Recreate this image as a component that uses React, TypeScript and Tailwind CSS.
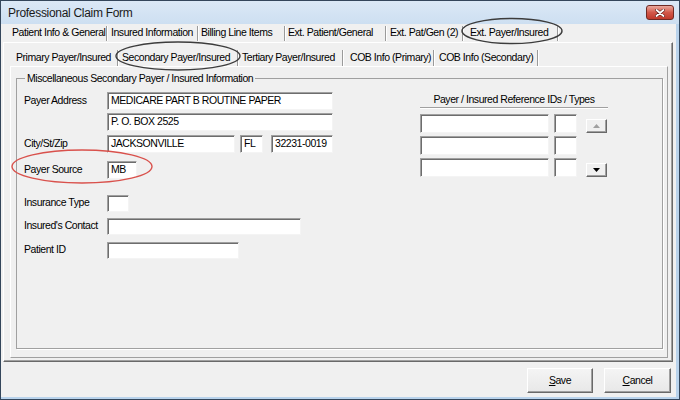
import React from 'react';

type Tab = { label: string; cls: string };

const topTabs: Tab[] = [
  { label: 'Patient Info & General', cls: 'w-[105px] pl-[11px]' },
  { label: 'Insured Information', cls: 'w-[89px] pl-[3px]' },
  { label: 'Billing Line Items', cls: 'w-[85px] pl-[2px]' },
  { label: 'Ext. Patient/General', cls: 'w-[99px] pl-[2px]' },
  { label: 'Ext. Pat/Gen (2)', cls: 'w-[75px] pl-[3px]' },
  { label: 'Ext. Payer/Insured', cls: 'w-[93px] pl-[6px]' },
];

const subTabs: Tab[] = [
  { label: 'Primary Payer/Insured', cls: 'w-[113px] pl-[12px]' },
  { label: 'Secondary Payer/Insured', cls: 'w-[118px] pl-[3px]' },
  { label: 'Tertiary Payer/Insured', cls: 'w-[103px] pl-[3px]' },
  { label: 'COB Info (Primary)', cls: 'w-[89px] pl-[6px]' },
  { label: 'COB Info (Secondary)', cls: 'w-[102px] pl-[4px]' },
];

const Sep = ({ h = 'h-[15px]' }: { h?: string }) => (
  <div className={`w-[2px] ${h} border-l border-l-[#9a9a9a] border-r border-r-white`} />
);

const Field = ({ w, h = 'h-[18px]', value = '' }: { w: string; h?: string; value?: string }) => (
  <div
    className={`${w} ${h} shrink-0 bg-white border-t border-l border-t-[#a0a0a0] border-l-[#a0a0a0] border-r border-b border-r-[#f4f4f4] border-b-[#f4f4f4] shadow-[inset_1px_1px_0_#6d6d6d] pl-[3px] flex items-center whitespace-nowrap overflow-hidden`}
  >
    {value}
  </div>
);

const Row = ({ label, mt, children }: { label?: string; mt: string; children: React.ReactNode }) => (
  <div className={`flex items-center ${mt}`}>
    <div className="w-[85px] shrink-0 pl-[2px] whitespace-nowrap">{label}</div>
    {children}
  </div>
);

const SpinButton = ({ down }: { down?: boolean }) => (
  <div className="ml-[9px] w-[21px] h-[14px] self-end bg-[#f0f0f0] border-t border-l border-white border-r border-b border-r-[#696969] border-b-[#696969] shadow-[inset_-1px_-1px_0_#a0a0a0] flex items-center justify-center">
    <svg width="7" height="4" viewBox="0 0 7 4">
      {down ? <path d="M0 0h7L3.5 4z" fill="#000" /> : <path d="M0 4h7L3.5 0z" fill="#a0a0a0" />}
    </svg>
  </div>
);

const Button = ({ first, rest, w }: { first: string; rest: string; w: string }) => (
  <div className={`${w} h-[25px] bg-gradient-to-b from-[#f4f4f4] to-[#e8e8e8] border-t border-l border-white border-r border-b border-r-[#696969] border-b-[#696969] shadow-[inset_-1px_-1px_0_#a0a0a0] flex items-center justify-center`}>
    <span className="underline underline-offset-1">{first}</span>
    {rest}
  </div>
);

export default function App() {
  return (
    <div className="relative w-[680px] h-[400px] bg-[#b9d3ec] border border-[#34465b] flex flex-col font-['Liberation_Sans',Arial,sans-serif] text-[10.5px] tracking-[-0.45px] text-black overflow-hidden">
      {/* title bar */}
      <div className="h-[23px] shrink-0 bg-gradient-to-b from-[#dbe8f6] to-[#cddff1] flex items-center justify-between pl-[7px] pr-[5px]">
        <span className="text-[12px] tracking-[-0.3px] text-[#1a1a1a]">Professional Claim Form</span>
        <div className="w-[28px] h-[15px] rounded-[3px] border border-[#6e2a24] bg-gradient-to-b from-[#e9a89d] via-[#d2584a] to-[#c0392b] flex items-center justify-center">
          <svg width="10" height="8" viewBox="0 0 10 8">
            <path d="M1.5 1l7 6M8.5 1l-7 6" stroke="#5a1d18" strokeWidth="3" strokeLinecap="round" />
            <path d="M1.5 1l7 6M8.5 1l-7 6" stroke="#fff" strokeWidth="1.8" strokeLinecap="round" />
          </svg>
        </div>
      </div>

      {/* client area */}
      <div className="w-[675px] h-[373px] bg-[#f0f0f0] flex flex-col">
        <div className="h-[18px] flex items-center">
          {topTabs.map((t) => (
            <React.Fragment key={t.label}>
              <div className={`${t.cls} whitespace-nowrap`}>{t.label}</div>
              <Sep />
            </React.Fragment>
          ))}
        </div>

        {/* outer tab page */}
        <div className="ml-[2px] w-[670px] h-[320px] border-t border-l border-white border-r border-b border-r-[#696969] border-b-[#696969] shadow-[inset_-1px_-1px_0_#a0a0a0] flex flex-col">
          <div className="h-[23px] pt-[6px] flex items-center">
            {subTabs.map((t) => (
              <React.Fragment key={t.label}>
                <div className={`${t.cls} whitespace-nowrap`}>{t.label}</div>
                <Sep h="h-[16px]" />
              </React.Fragment>
            ))}
          </div>

          {/* inner tab page */}
          <div className="ml-[6px] w-[658px] h-[292px] border-t border-l border-white border-r border-b border-r-[#a0a0a0] border-b-[#a0a0a0]">
            <fieldset className="mt-[4px] ml-[5px] w-[647px] h-[278px] border border-[#a0a0a0] shadow-[1px_1px_0_#fff] px-[5px] pt-[5px]">
              <legend className="ml-[3px] px-[2px]">Miscellaneous Secondary Payer / Insured Information</legend>
              <div className="flex">
                <div className="w-[311px] flex flex-col">
                  <Row label="Payer Address" mt="mt-0">
                    <Field w="w-[226px]" value="MEDICARE PART B ROUTINE PAPER" />
                  </Row>
                  <Row mt="mt-[3px]">
                    <Field w="w-[226px]" value="P. O. BOX 2525" />
                  </Row>
                  <Row label="City/St/Zip" mt="mt-[4px]">
                    <Field w="w-[128px]" value="JACKSONVILLE" />
                    <div className="ml-[5px]">
                      <Field w="w-[23px]" value="FL" />
                    </div>
                    <div className="ml-[8px]">
                      <Field w="w-[62px]" value="32231-0019" />
                    </div>
                  </Row>
                  <Row label="Payer Source" mt="mt-[8px]">
                    <Field w="w-[30px]" value="MB" />
                  </Row>
                  <Row label="Insurance Type" mt="mt-[16px]">
                    <Field w="w-[22px]" h="h-[17px]" />
                  </Row>
                  <Row label="Insured's Contact" mt="mt-[6px]">
                    <Field w="w-[194px]" h="h-[17px]" />
                  </Row>
                  <Row label="Patient ID" mt="mt-[7px]">
                    <Field w="w-[132px]" h="h-[17px]" />
                  </Row>
                </div>

                <div className="ml-[87px] w-[188px] flex flex-col">
                  <div className="h-[16px] text-center border-b border-b-[#a0a0a0] shadow-[0_1px_0_#fff] whitespace-nowrap">
                    Payer / Insured Reference IDs / Types
                  </div>
                  <div className="mt-[6px] flex flex-col gap-[3px]">
                    <div className="flex">
                      <Field w="w-[129px]" h="h-[19px]" />
                      <div className="ml-[5px]">
                        <Field w="w-[23px]" h="h-[19px]" />
                      </div>
                      <SpinButton />
                    </div>
                    <div className="flex">
                      <Field w="w-[129px]" h="h-[19px]" />
                      <div className="ml-[5px]">
                        <Field w="w-[23px]" h="h-[19px]" />
                      </div>
                    </div>
                    <div className="flex">
                      <Field w="w-[129px]" h="h-[19px]" />
                      <div className="ml-[5px]">
                        <Field w="w-[23px]" h="h-[19px]" />
                      </div>
                      <SpinButton down />
                    </div>
                  </div>
                </div>
              </div>
            </fieldset>
          </div>
        </div>

        <div className="mt-[6px] flex justify-end gap-[11px] pr-[5px]">
          <Button first="S" rest="ave" w="w-[66px]" />
          <Button first="C" rest="ancel" w="w-[67px]" />
        </div>
      </div>

      {/* annotation ellipses */}
      <svg className="absolute -left-px -top-px w-[680px] h-[400px] pointer-events-none" viewBox="0 0 680 400">
        <ellipse cx="512" cy="31" rx="50" ry="12.5" fill="none" stroke="#3c3c3c" strokeWidth="1.4" />
        <ellipse cx="178" cy="56" rx="62" ry="14" fill="none" stroke="#3c3c3c" strokeWidth="1.4" />
        <ellipse cx="82" cy="166.5" rx="70" ry="16.5" fill="none" stroke="#d9514c" strokeWidth="1.4" />
      </svg>
    </div>
  );
}
